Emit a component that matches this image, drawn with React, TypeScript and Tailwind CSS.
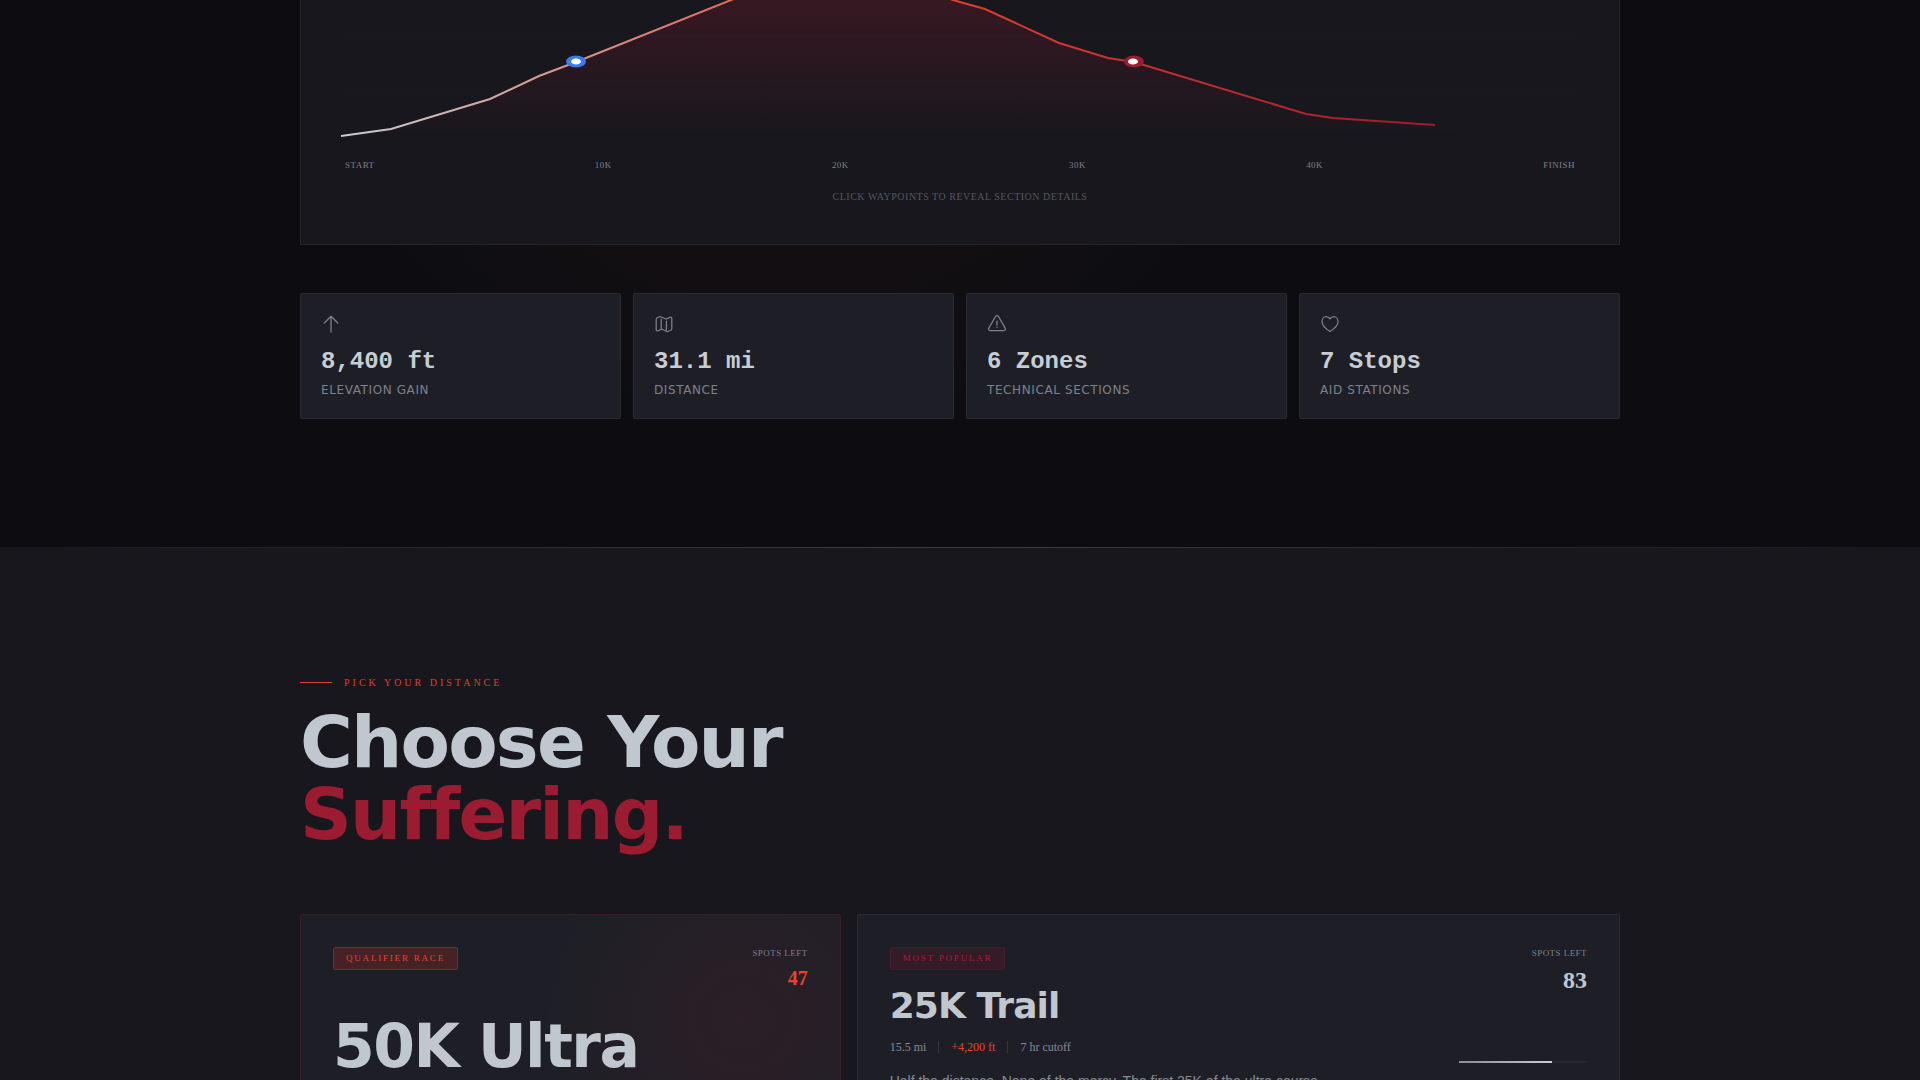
import React, { useState } from 'react';

interface Stat {
  id: string;
  value: string;
  label: string;
  icon: React.ReactNode;
}

const distanceMarks = ['START', '10K', '20K', '30K', '40K', 'FINISH'];

const stats: Stat[] = [
  {
    id: 'gain',
    value: '8,400 ft',
    label: 'Elevation Gain',
    icon: <path d="M10 18V2.2M3.2 9 10 2.2 16.8 9" />,
  },
  {
    id: 'distance',
    value: '31.1 mi',
    label: 'Distance',
    icon: (
      <>
        <path d="M2.2 5.6c0-1 .3-1.4 1.2-1.8l2-.9c.8-.3 1.3-.3 2 .1l3.8 1.7c.8.4 1.3.4 2 .1l2.4-1.4c1.2-.6 2.2-.2 2.2 1.2v9.8c0 1-.3 1.4-1.2 1.8l-2.4 1.1c-.8.4-1.3.4-2 0l-3.6-1.8c-.8-.4-1.3-.4-2 0l-2.2 1.2c-1.2.6-2.2.1-2.2-1.2z" />
        <path d="M7.2 5v9.5M12.4 7v9" />
      </>
    ),
  },
  {
    id: 'zones',
    value: '6 Zones',
    label: 'Technical Sections',
    icon: (
      <>
        <path d="M8.5 2.5c.7-1.2 2.3-1.2 3 0l6.7 11.6c.7 1.2-.1 2.4-1.4 2.4H3.2c-1.3 0-2.1-1.2-1.4-2.4z" />
        <path d="M10 7v4M10 13v.4" />
      </>
    ),
  },
  {
    id: 'stops',
    value: '7 Stops',
    label: 'Aid Stations',
    icon: (
      <path d="M10 17.5C5.200 14.500 2 11.400 2 7.500 2 4.700 3.900 2.700 6.300 2.700c1.600 0 2.900.8 3.700 2.200.8-1.400 2.100-2.200 3.700-2.200C16.100 2.700 18 4.700 18 7.500c0 3.900-3.200 7-8 10z" />
    ),
  },
];

const ridge =
  'M0 136 L50 129 L149 99 L198 76 L235 62 L390 0 L500 -40 L612 0 L644 9 L718 43 L767 58 L793 62 L965 114 L992 118 L1094 125';

const ElevationChart: React.FC = () => {
  const [active, setActive] = useState<string | null>(null);

  return (
    <div className="border border-t-0 border-[#26262c] bg-[#17171d] px-10 pb-10">
      <svg viewBox="0 0 1238 152" preserveAspectRatio="none" className="h-38 w-full" aria-label="Elevation profile">
        <defs>
          <linearGradient id="ridgeLine" x1="0" x2="1">
            <stop offset="0%" stopColor="#c8ccd2" />
            <stop offset="50%" stopColor="#e8432e" />
            <stop offset="100%" stopColor="#9b1b30" />
          </linearGradient>
          <linearGradient id="ridgeFill" gradientUnits="userSpaceOnUse" x1="0" y1="0" x2="0" y2="142">
            <stop offset="0%" stopColor="#9b1b30" stopOpacity="0.24" />
            <stop offset="100%" stopColor="#9b1b30" stopOpacity="0" />
          </linearGradient>
        </defs>
        <path d="M4 37H1234M4 94H1234" stroke="#ffffff" strokeOpacity="0.015" />
        <path d={`${ridge} L1190 142 L0 142 Z`} fill="url(#ridgeFill)" />
        <path d={ridge} fill="none" stroke="url(#ridgeLine)" strokeWidth="2" />
        <g className="cursor-pointer" onClick={() => setActive(active === 'climb' ? null : 'climb')}>
          <ellipse cx="235" cy="61.5" rx="10" ry="6" fill="#3b7bf0" />
          <ellipse cx="235" cy="61.5" rx="5" ry="3" fill="#ffffff" />
        </g>
        <g className="cursor-pointer" onClick={() => setActive(active === 'descent' ? null : 'descent')}>
          <ellipse cx="793" cy="61.5" rx="10" ry="6" fill="#9b1b30" />
          <ellipse cx="792" cy="61.5" rx="5" ry="3" fill="#ffffff" />
        </g>
      </svg>
      <div className="mt-1.5 flex justify-between px-1 text-[9px] leading-[14px] tracking-wider text-[#7d818b]">
        {distanceMarks.map(mark => (
          <span key={mark}>{mark}</span>
        ))}
      </div>
      <p className="mt-[17px] text-center text-[10px] leading-[15px] tracking-wider text-[#55575f] uppercase">
        Click waypoints to reveal section details
      </p>
    </div>
  );
};

const StatCard: React.FC<{ stat: Stat }> = ({ stat }) => (
  <div className="rounded-xs border border-[#2b2b31] bg-[#1e1f26] p-5">
    <svg
      viewBox="0 0 20 20"
      className="mb-3 size-5 text-[#7d818b]"
      fill="none"
      stroke="currentColor"
      strokeWidth="1.25"
      strokeLinecap="round"
      strokeLinejoin="round"
    >
      {stat.icon}
    </svg>
    <div className="font-['Liberation_Mono',monospace] text-2xl font-bold text-[#c8cdd4]">{stat.value}</div>
    <div className="mt-1 font-['DejaVu_Sans',sans-serif] text-xs tracking-wider text-[#7d818b] uppercase">{stat.label}</div>
  </div>
);

const App: React.FC = () => {
  return (
    <div className="h-screen overflow-hidden bg-[#17171d] font-['Liberation_Serif',serif] text-[#c0c7cf]">
      <section className="bg-[#0d0d11] bg-[radial-gradient(ellipse_480px_400px_at_41%_40px,rgba(232,67,46,0.06),transparent)] px-6 pb-32">
        <div className="mx-auto max-w-[1320px]">
          <ElevationChart />
          <div className="mt-12 grid grid-cols-4 gap-3">
            {stats.map(stat => (
              <StatCard key={stat.id} stat={stat} />
            ))}
          </div>
        </div>
      </section>

      <div className="h-px bg-linear-to-r from-transparent via-[#3d3d42] to-transparent" />

      <section className="px-6 pt-[127px] pb-32">
        <div className="mx-auto max-w-[1320px]">
          <div className="flex items-center gap-3">
            <span className="h-px w-8 bg-[#d8432f]" />
            <span className="text-[10px] leading-[15px] tracking-[0.3em] text-[#d8432f] uppercase">Pick your distance</span>
          </div>
          <h2 className="mt-4 font-['DejaVu_Sans',sans-serif] text-7xl leading-none font-bold tracking-tight">
            Choose Your
            <br />
            <span className="text-[#9b1b30]">Suffering.</span>
          </h2>

          <div className="mt-16 grid grid-cols-12 gap-4">
            <article className="col-span-5 min-h-96 rounded-xs border border-[#3a1d27] bg-[#1e1f26] bg-[radial-gradient(circle_at_82%_104px,rgba(155,27,48,0.11),transparent_200px)] p-8">
              <div className="flex items-start justify-between">
                <span className="rounded-xs border border-[#7a2c2c] bg-[#462226] px-3 py-1 text-[9px] leading-[13px] tracking-[0.2em] text-[#e8432e] uppercase">
                  Qualifier race
                </span>
                <div className="text-right">
                  <div className="text-[9px] leading-[13px] tracking-wider text-[#7d818b] uppercase">Spots left</div>
                  <div className="mt-1 text-xl font-bold text-[#e8432e]">47</div>
                </div>
              </div>
              <h3 className="mt-6 font-['DejaVu_Sans',sans-serif] text-6xl leading-none font-bold tracking-tight">50K Ultra</h3>
            </article>

            <article className="col-span-7 flex items-start justify-between gap-8 rounded-xs border border-[#2b2b31] bg-[#1e1f26] p-8">
              <div className="max-w-md">
                <span className="inline-block rounded-xs border border-[#461c2a] bg-[#351b27] px-3 py-1 align-top text-[9px] leading-[13px] tracking-[0.2em] text-[#a81c38] uppercase">
                  Most popular
                </span>
                <h3 className="mt-[17px] font-['DejaVu_Sans',sans-serif] text-4xl leading-none font-bold tracking-tight">25K Trail</h3>
                <div className="mt-[15px] flex items-center gap-3 text-xs text-[#868a94]">
                  <span>15.5 mi</span>
                  <span className="h-3 w-px bg-[#35363d]" />
                  <span className="text-[#e8432e]">+4,200 ft</span>
                  <span className="h-3 w-px bg-[#35363d]" />
                  <span>7 hr cutoff</span>
                </div>
                <p className="mt-4 font-['Liberation_Sans',sans-serif] text-sm text-[#868a94]">
                  Half the distance. None of the mercy. The first 25K of the ultra course
                </p>
              </div>
              <div className="text-right">
                <div className="text-[9px] leading-[13px] tracking-wider text-[#7d818b] uppercase">Spots left</div>
                <div className="mt-1 text-2xl font-bold">83</div>
                <div className="mt-[65px] h-0.5 w-32 bg-[#24252c]">
                  <div className="h-full w-[73%] bg-linear-to-r from-[#8b8c94] to-[#c8cdd4]" />
                </div>
              </div>
            </article>
          </div>
        </div>
      </section>
    </div>
  );
};

export default App;
